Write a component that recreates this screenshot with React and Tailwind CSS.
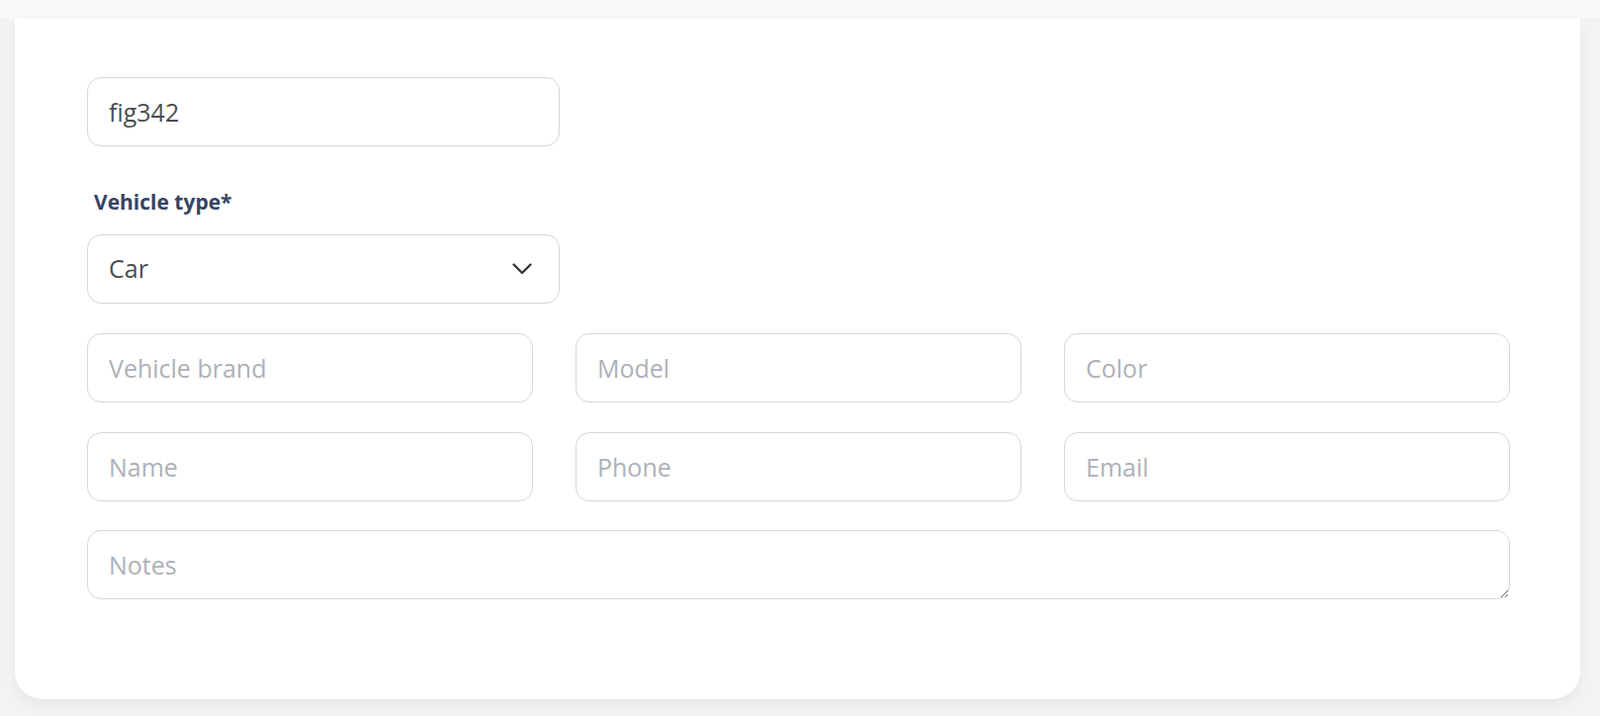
import { useState } from 'react';

const inputClass =
  'w-full h-[70px] px-[21px] bg-white border border-[#d5d7db] rounded-[14px] text-[25px] text-[#4a4d52] ' +
  'placeholder:text-[#adb1b8] focus:outline-none';

const Chevron = () => (
  <svg width="20" height="12" viewBox="0 0 20 12" fill="none">
    <polyline points="1.5,1.5 10,10 18.5,1.5" stroke="#333" strokeWidth="2.3" strokeLinecap="round" strokeLinejoin="round" />
  </svg>
);

const App = () => {
  const [form, setForm] = useState({
    plate: 'fig342',
    type: 'Car',
    brand: '',
    model: '',
    color: '',
    name: '',
    phone: '',
    email: '',
    notes: ''
  });

  const handleChange = (e) => {
    const { name, value } = e.target;
    setForm(prev => ({ ...prev, [name]: value }));
  };

  return (
    <div className="min-h-[724px] bg-[#f2f3f5] flex flex-col" style={{ fontFamily: '"Open Sans", "Noto Sans", sans-serif' }}>
      {/* top bar */}
      <div className="h-[19px] bg-[#f8f9fa] shrink-0"></div>

      <div className="pl-[15px] pr-[20px]">
        <div className="bg-white rounded-b-[28px] shadow-[0_6px_14px_rgba(0,0,0,0.05)] pt-[59px] pb-[101px] pl-[73px] pr-[71px]">
          {/* plate */}
          <input
            type="text"
            name="plate"
            value={form.plate}
            onChange={handleChange}
            className={`${inputClass} !w-[478px] block`}
          />

          {/* vehicle type */}
          <label className="block mt-[42px] ml-[7px] text-[21px] leading-[28px] font-bold text-[#364463]">
            Vehicle type*
          </label>
          <div className="mt-[19px] w-[478px] h-[70px] pl-[21px] pr-[27px] border border-[#d5d7db] rounded-[14px] flex items-center justify-between text-[25px] text-[#4a4d52]">
            <span>{form.type}</span>
            <Chevron />
          </div>

          {/* details */}
          <div className="grid grid-cols-3 gap-x-[43px] gap-y-[30px] mt-[30px]">
            <input type="text" name="brand" value={form.brand} onChange={handleChange} placeholder="Vehicle brand" className={inputClass} />
            <input type="text" name="model" value={form.model} onChange={handleChange} placeholder="Model" className={inputClass} />
            <input type="text" name="color" value={form.color} onChange={handleChange} placeholder="Color" className={inputClass} />
            <input type="text" name="name" value={form.name} onChange={handleChange} placeholder="Name" className={inputClass} />
            <input type="text" name="phone" value={form.phone} onChange={handleChange} placeholder="Phone" className={inputClass} />
            <input type="text" name="email" value={form.email} onChange={handleChange} placeholder="Email" className={inputClass} />
          </div>

          <textarea
            name="notes"
            value={form.notes}
            onChange={handleChange}
            placeholder="Notes"
            className="block mt-[29px] w-full h-[70px] px-[21px] py-[16px] leading-[36px] bg-white border border-[#d5d7db] rounded-[14px] text-[25px] text-[#4a4d52] placeholder:text-[#adb1b8] focus:outline-none"
          />
        </div>
      </div>
    </div>
  );
};

export default App;
